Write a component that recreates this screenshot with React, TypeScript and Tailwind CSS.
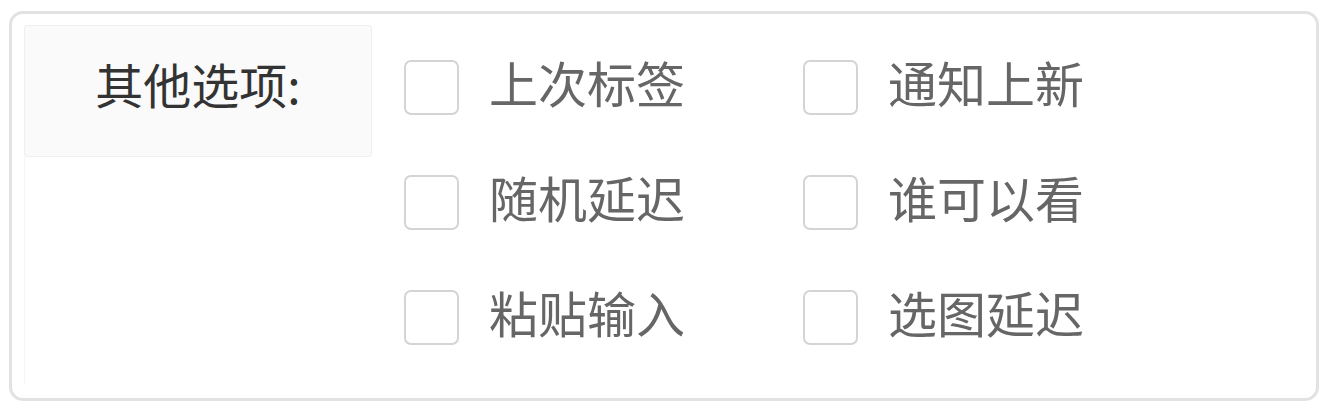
import React, { useState } from "react";

const OPTIONS = [
  ["上次标签", "通知上新"],
  ["随机延迟", "谁可以看"],
  ["粘贴输入", "选图延迟"],
];

const FONT = { fontFamily: "'Noto Sans CJK SC', 'Noto Sans', sans-serif" };

function Option({ label }: { label: string }) {
  const [checked, setChecked] = useState(false);
  return (
    <label className="flex h-[55px] w-[399px] cursor-pointer items-center gap-[30px]">
      <span
        onClick={() => setChecked(!checked)}
        className={`h-[55px] w-[55px] shrink-0 rounded-[7px] border-2 ${
          checked ? "border-[#3b82f6] bg-[#3b82f6]" : "border-[#d4d4d4] bg-white"
        }`}
      />
      <span className="mb-[12px] text-[49px] leading-none text-[#666666]">{label}</span>
    </label>
  );
}

export default function App() {
  return (
    <div className="min-h-[411px] w-[1328px] bg-white pt-[11px] pl-[9px]" style={FONT}>
      <div className="flex h-[390px] w-[1310px] rounded-[14px] border-[3px] border-[#e2e2e2] bg-white">
        {/* Label column */}
        <div className="ml-[12px] mt-[11px] flex w-[348px] flex-col">
          <div className="flex h-[132px] items-center justify-center rounded-[3px] border border-[#efefef] bg-[#fafafa] pb-[16px]">
            <span className="text-[48px] leading-none text-[#333333]">其他选项:</span>
          </div>
          <div className="mb-[13px] flex-1 border-l border-[#f6f6f6]" />
        </div>

        {/* Options */}
        <div className="ml-[32px] flex flex-col gap-[60px] pt-[46px]">
          {OPTIONS.map((row, i) => (
            <div key={i} className="flex">
              {row.map((label) => (
                <Option key={label} label={label} />
              ))}
            </div>
          ))}
        </div>
      </div>
    </div>
  );
}
